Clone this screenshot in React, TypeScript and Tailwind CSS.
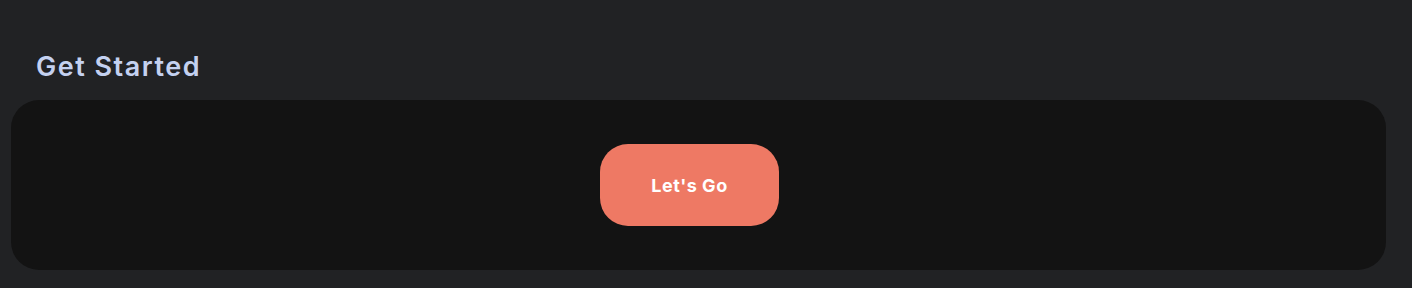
import React from "react";

const App = () => {
  return (
    <div className="w-full h-[288px] bg-[#212224] pt-[47px] px-[11px] font-['Inter',sans-serif]">
      <h2 className="pl-[25px] text-[27px] leading-[40px] font-semibold text-[#c4d1f0] tracking-[1.5px]">
        Get Started
      </h2>
      <div className="mt-[13px] w-[1375px] h-[170px] bg-[#131313] rounded-[28px] flex items-center justify-center pr-[18px]">
        <button className="w-[179px] h-[82px] rounded-[28px] bg-[#ee7964] text-white text-[18px] font-bold tracking-[0.5px]">
          Let's Go
        </button>
      </div>
    </div>
  );
};

export default App;
